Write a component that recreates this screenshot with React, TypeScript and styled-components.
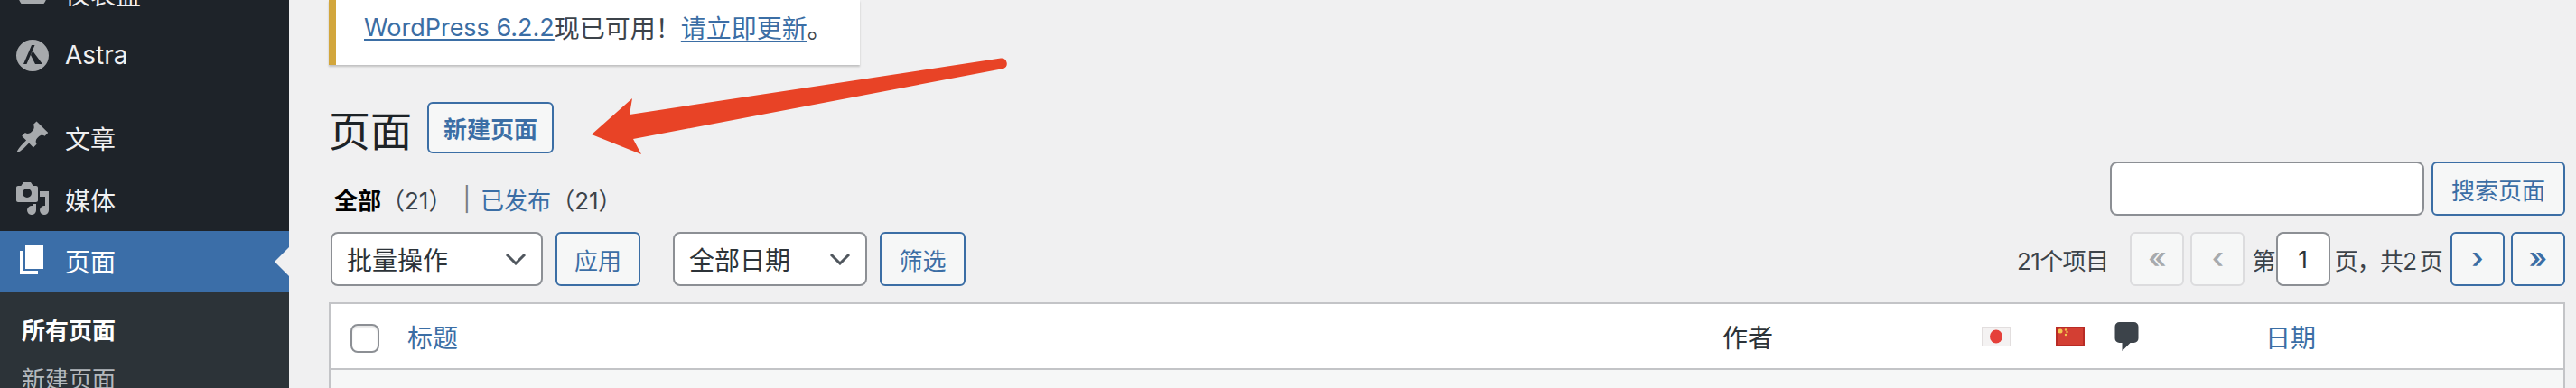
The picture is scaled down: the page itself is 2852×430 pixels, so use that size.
import styled, { createGlobalStyle } from "styled-components";

const BLUE = "#3b6ea5";
const FONT = `Inter, "Noto Sans CJK SC", sans-serif`;

const GlobalStyle = createGlobalStyle`
  html, body {
    margin: 0;
    padding: 0;
    background: #f0f0f1;
  }
  * {
    box-sizing: border-box;
  }
`;

const Page = styled.div`
  position: relative;
  display: flex;
  width: 2852px;
  height: 430px;
  overflow: hidden;
  background: #f0f0f1;
  font-family: ${FONT};
  font-size: 26px;
  color: #3c434a;
`;

const Sidebar = styled.aside`
  flex: 0 0 320px;
  height: 470px;
  margin-top: -40px;
  background: #1e2329;
`;

const MenuItem = styled.div<{ $active?: boolean; $gapAfter?: boolean }>`
  position: relative;
  display: flex;
  align-items: center;
  height: 68px;
  margin-bottom: ${(p) => (p.$gapAfter ? "24px" : "0")};
  padding: 0 0 3px 72px;
  background: ${(p) => (p.$active ? "#3b6ea8" : "transparent")};
  color: ${(p) => (p.$active ? "#fff" : "#f0f0f1")};
  font-size: 28px;

  ${(p) =>
    p.$active &&
    `
    &::after {
      content: "";
      position: absolute;
      right: 0;
      top: 18px;
      border: 16px solid transparent;
      border-right-color: #f0f0f1;
    }
  `}
`;

const MenuIcon = styled.svg`
  position: absolute;
  left: 16px;
  top: 12px;
  width: 40px;
  height: 40px;
  fill: currentColor;
`;

const SubMenu = styled.div`
  padding: 16px 0 0 24px;
  background: #2c3338;
`;

const SubItem = styled.div<{ $current?: boolean }>`
  height: 54px;
  line-height: 54px;
  font-weight: ${(p) => (p.$current ? 700 : 400)};
  color: ${(p) => (p.$current ? "#fff" : "#b4b9be")};
`;

const Main = styled.main`
  flex: 1;
  display: flex;
  flex-direction: column;
  padding: 0 12px 0 44px;

  & > * {
    flex: none;
  }
`;

const Notice = styled.div`
  display: flex;
  align-items: center;
  width: 588px;
  height: 72px;
  padding: 0 0 12px 31px;
  background: #fff;
  border-left: 8px solid #d2a63c;
  box-shadow: 0 2px 2px rgba(0, 0, 0, 0.2);
  font-size: 28px;
  white-space: nowrap;
`;

const TextLink = styled.a<{ $latin?: boolean }>`
  color: ${BLUE};
  font-size: ${(p) => (p.$latin ? "27px" : "28px")};
  text-decoration: underline;
  text-decoration-thickness: 2px;
  text-underline-offset: 3px;
`;

const HeadingRow = styled.div`
  display: flex;
  align-items: center;
  gap: 17px;
  margin-top: 41px;
  height: 57px;
`;

const Title = styled.h1`
  margin: 0;
  font-size: 46px;
  font-weight: 400;
  color: #1d2327;
`;

const Button = styled.button<{ $width: number; $strong?: boolean }>`
  display: flex;
  align-items: center;
  justify-content: center;
  flex: none;
  width: ${(p) => p.$width}px;
  height: ${(p) => (p.$strong ? 57 : 60)}px;
  padding: 0;
  border: 2px solid ${BLUE};
  border-radius: 6px;
  background: #f6f7f7;
  color: ${BLUE};
  font-family: ${FONT};
  font-size: 26px;
  font-weight: ${(p) => (p.$strong ? 700 : 400)};
`;

const SearchRow = styled.div`
  display: flex;
  justify-content: space-between;
  margin-top: 9px;
  height: 60px;
`;

const Views = styled.div`
  display: flex;
  align-items: center;
  height: 40px;
  margin-top: 21px;
  padding-left: 6px;
  white-space: nowrap;
`;

const ViewLabel = styled.strong`
  font-weight: 700;
  color: #000;
`;

const ViewLink = styled.span`
  color: ${BLUE};
`;

const ViewSep = styled.span`
  margin: 0 11px 0 12px;
  color: #787c82;
`;

const SearchGroup = styled.div`
  display: flex;
  gap: 8px;
`;

const Field = styled.input<{ $width: number; $center?: boolean }>`
  flex: none;
  width: ${(p) => p.$width}px;
  height: 60px;
  padding: 0;
  border: 2px solid #8c8f94;
  border-radius: 8px;
  background: #fff;
  color: #2c3338;
  font-family: ${FONT};
  font-size: 26px;
  text-align: ${(p) => (p.$center ? "center" : "left")};
`;

const Toolbar = styled.div`
  display: flex;
  justify-content: space-between;
  align-items: center;
  margin-top: 18px;
  height: 60px;
`;

const Filters = styled.div`
  display: flex;
  padding-left: 2px;
`;

const SelectBox = styled.div<{ $width: number; $after: number }>`
  display: flex;
  align-items: center;
  justify-content: space-between;
  flex: none;
  width: ${(p) => p.$width}px;
  height: 60px;
  margin-right: ${(p) => p.$after}px;
  padding: 0 16px;
  border: 2px solid #8c8f94;
  border-radius: 8px;
  background: #fff;
  color: #2c3338;
  font-size: 28px;
`;

const Chevron = styled.svg`
  width: 24px;
  height: 14px;
  fill: none;
  stroke: #50575e;
  stroke-width: 3;
`;

const ApplyGap = styled.div`
  width: 36px;
`;

const Pager = styled.div`
  display: flex;
  align-items: center;
  white-space: nowrap;
`;

const PagerCount = styled.span`
  margin-right: 24px;
  letter-spacing: -0.6px;
`;

const PagerText = styled.span<{ $left: number; $right: number }>`
  margin: 0 ${(p) => p.$right}px 0 ${(p) => p.$left}px;
  letter-spacing: -0.8px;
  word-spacing: -3px;
`;

const PageButton = styled.button<{ $disabled?: boolean; $after: number }>`
  flex: none;
  width: 60px;
  height: 60px;
  margin-right: ${(p) => p.$after}px;
  padding: 0 0 4px;
  border: 2px solid ${(p) => (p.$disabled ? "#dcdcde" : BLUE)};
  border-radius: 6px;
  background: #f6f7f7;
  color: ${(p) => (p.$disabled ? "#a7aaad" : BLUE)};
  font-family: ${FONT};
  font-size: 32px;
  font-weight: 600;
`;

const Table = styled.div`
  margin-top: 18px;
  border: 2px solid #c3c4c7;
  border-bottom: 0;
  background: #fff;
`;

const HeaderRow = styled.div`
  display: grid;
  grid-template-columns: 85px 1456px 287px 82px 65px 167px 1fr;
  align-items: center;
  height: 73px;
  border-bottom: 2px solid #c3c4c7;
`;

const CheckCell = styled.div`
  padding: 4px 0 0 22px;
`;

const CheckBox = styled.span`
  display: block;
  width: 32px;
  height: 32px;
  border: 2px solid #8c8f94;
  border-radius: 8px;
  background: #fff;
  box-shadow: inset 0 2px 2px rgba(0, 0, 0, 0.1);
`;

const SortLink = styled.span`
  color: ${BLUE};
  font-size: 28px;
`;

const HeaderText = styled.span`
  font-size: 28px;
  color: #2c3338;
`;

const FlagIcon = styled.svg`
  display: block;
  width: 32px;
  height: 22px;
`;

const CommentIcon = styled.svg`
  display: block;
  width: 27px;
  height: 32px;
  fill: #3c434a;
`;

const EmptyRow = styled.div`
  height: 30px;
  background: #f6f7f7;
`;

const Arrow = styled.svg`
  position: absolute;
  left: 650px;
  top: 60px;
  width: 470px;
  height: 115px;
  fill: #e84326;
`;

const menuBefore = [{ label: "Astra" }];

export default function App() {
  return (
    <Page>
      <GlobalStyle />
      <Sidebar>
        <MenuItem>
          <MenuIcon viewBox="0 0 20 20" style={{ color: "#a7aaad" }}>
            <path d="M3.76 16h12.48A7.97 7.97 0 0 0 18 11c0-4.42-3.58-8-8-8s-8 3.58-8 8c0 1.9.66 3.63 1.76 5zM10 6a1 1 0 1 1 0 2 1 1 0 0 1 0-2z" />
          </MenuIcon>
          仪表盘
        </MenuItem>
        {menuBefore.map((item) => (
          <MenuItem key={item.label} $gapAfter>
            <MenuIcon viewBox="0 0 40 40" style={{ color: "#a7aaad" }}>
              <path d="M20 4a18 17.5 0 1 0 0 35 18 17.5 0 0 0 0-35zM10 31l9-21h3.5L13.5 31zm13 0-5-10 2.2-4.6L31 31z" />
            </MenuIcon>
            {item.label}
          </MenuItem>
        ))}
        <MenuItem>
          <MenuIcon viewBox="0 0 20 20" style={{ color: "#a7aaad" }}>
            <path d="M10.44 3.02l1.82-1.82 6.36 6.35-1.83 1.82c-1.05-.68-2.48-.57-3.41.36l-.75.75c-.92.93-1.04 2.35-.35 3.41l-1.83 1.82-2.41-2.41-2.8 2.79c-.42.42-3.38 2.71-3.8 2.29s1.86-3.39 2.28-3.81l2.79-2.79L4.1 9.36l1.83-1.82c1.05.69 2.48.57 3.4-.36l.75-.75c.93-.92 1.05-2.35.36-3.41z" />
          </MenuIcon>
          文章
        </MenuItem>
        <MenuItem>
          <MenuIcon viewBox="0 0 20 20" style={{ color: "#a7aaad" }}>
            <path d="M13 11V4c0-.55-.45-1-1-1h-1.67L9 1H5L3.67 3H2c-.55 0-1 .45-1 1v7c0 .55.45 1 1 1h10c.55 0 1-.45 1-1zM7 4.5a2.5 2.5 0 1 1 0 5 2.5 2.5 0 0 1 0-5zM14 6h5v10.5a2.5 2.5 0 1 1-2-2.45V9h-3V6zm-4 8.05V13h2v3.5a2.5 2.5 0 1 1-2-2.45z" />
          </MenuIcon>
          媒体
        </MenuItem>
        <MenuItem $active>
          <MenuIcon viewBox="0 0 20 20">
            <path d="M6 15V2h10v13H6zm-1 1h8v2H3V5h2v11z" />
          </MenuIcon>
          页面
        </MenuItem>
        <SubMenu>
          <SubItem $current>所有页面</SubItem>
          <SubItem>新建页面</SubItem>
        </SubMenu>
      </Sidebar>

      <Main>
        <Notice>
          <TextLink $latin>WordPress 6.2.2</TextLink>现已可用！<TextLink>请立即更新</TextLink>。
        </Notice>

        <HeadingRow>
          <Title>页面</Title>
          <Button $width={140} $strong>
            新建页面
          </Button>
        </HeadingRow>

        <SearchRow>
          <Views>
            <ViewLabel>全部</ViewLabel>（21）
            <ViewSep>|</ViewSep>
            <ViewLink>已发布</ViewLink>（21）
          </Views>
          <SearchGroup>
            <Field $width={348} />
            <Button $width={148}>搜索页面</Button>
          </SearchGroup>
        </SearchRow>

        <Toolbar>
          <Filters>
            <SelectBox $width={235} $after={14}>
              批量操作
              <Chevron viewBox="0 0 24 14">
                <path d="M2 2l10 10L22 2" />
              </Chevron>
            </SelectBox>
            <Button $width={94}>应用</Button>
            <ApplyGap />
            <SelectBox $width={215} $after={14}>
              全部日期
              <Chevron viewBox="0 0 24 14">
                <path d="M2 2l10 10L22 2" />
              </Chevron>
            </SelectBox>
            <Button $width={95}>筛选</Button>
          </Filters>
          <Pager>
            <PagerCount>21个项目</PagerCount>
            <PageButton $disabled $after={7}>«</PageButton>
            <PageButton $disabled $after={0}>‹</PageButton>
            <PagerText $left={8} $right={1}>第</PagerText>
            <Field $width={60} $center defaultValue="1" />
            <PagerText $left={5} $right={9}>页，共2 页</PagerText>
            <PageButton $after={7}>›</PageButton>
            <PageButton $after={0}>»</PageButton>
          </Pager>
        </Toolbar>

        <Table>
          <HeaderRow>
            <CheckCell>
              <CheckBox />
            </CheckCell>
            <SortLink>标题</SortLink>
            <HeaderText>作者</HeaderText>
            <FlagIcon viewBox="0 0 32 22">
              <rect x="0.5" y="0.5" width="31" height="21" fill="#f4f2f2" stroke="#e2dede" />
              <ellipse cx="16" cy="11" rx="7" ry="7.5" fill="#e5403a" />
            </FlagIcon>
            <FlagIcon viewBox="0 0 32 22">
              <rect width="32" height="22" fill="#b92b25" />
              <rect x="2" y="2" width="28" height="18" fill="#d33f33" />
              <circle cx="5" cy="5" r="2.5" fill="#f2c84f" />
              <circle cx="11" cy="3.5" r="1.2" fill="#f2c84f" />
              <circle cx="12.5" cy="6" r="1.2" fill="#f2c84f" />
              <circle cx="11" cy="9" r="1.2" fill="#f2c84f" />
            </FlagIcon>
            <CommentIcon viewBox="0 0 26 32">
              <path d="M5 0h16a5 5 0 0 1 5 5v13a5 5 0 0 1-5 5h-4L8 32v-9H5a5 5 0 0 1-5-5V5a5 5 0 0 1 5-5z" />
            </CommentIcon>
            <SortLink>日期</SortLink>
          </HeaderRow>
          <EmptyRow />
        </Table>
      </Main>

      <Arrow viewBox="0 0 470 115">
        <path d="M5 89 50 49 47 67 458 4.5a6 6 0 0 1 3 11.5L51 94l9 17z" />
      </Arrow>
    </Page>
  );
}
